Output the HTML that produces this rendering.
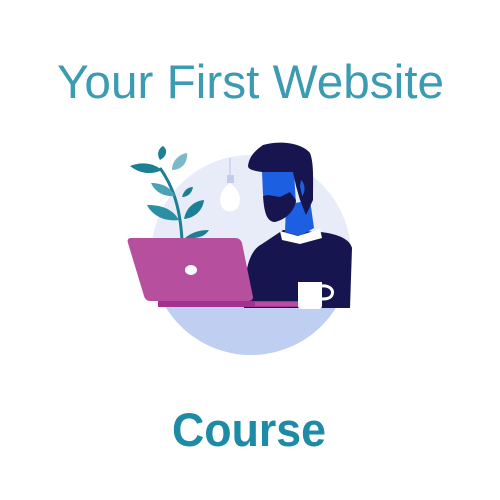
<!DOCTYPE html>
<html><head><style>html,body{margin:0;padding:0;background:#fff;width:500px;height:500px;overflow:hidden}</style></head>
<body>
<svg width="500" height="500" viewBox="0 0 500 500" xmlns="http://www.w3.org/2000/svg">
<text x="57" y="98" font-family="Liberation Sans, sans-serif" font-size="47" fill="#3a9bb2" textLength="387" lengthAdjust="spacingAndGlyphs">Your First Website</text>
<text x="172" y="446" font-family="Liberation Sans, sans-serif" font-weight="bold" font-size="47" fill="#1e8ba6" textLength="154" lengthAdjust="spacingAndGlyphs">Course</text>
<defs><clipPath id="c"><circle cx="251" cy="255" r="100"/></clipPath></defs>
<g clip-path="url(#c)">
<rect x="140" y="150" width="220" height="210" fill="#e8ecf9"/>
<rect x="140" y="307" width="220" height="60" fill="#bfcff1"/>
</g>
<!-- bulb -->
<line x1="230" y1="158" x2="230" y2="175" stroke="#c9d2ee" stroke-width="1.5"/>
<rect x="227" y="175" width="7" height="8" fill="#c2cdee"/>
<path d="M230 183 C220 190 218 200 222 207 C226 213 234 213 238 207 C242 200 240 190 230 183Z" fill="#fff"/>
<!-- plant -->
<path d="M160 168 C172 185 180 205 182 240" stroke="#1c7f93" stroke-width="3" fill="none"/>
<path d="M162 170 C152 162 140 162 130 166 C140 174 152 175 162 170Z" fill="#1c7f93"/>
<path d="M160 160 C156 154 159 148 163 146 C168 150 167 156 160 160Z" fill="#1c7f93"/>
<path d="M172 170 C172 160 180 154 187 153 C188 162 182 170 172 170Z" fill="#7ab9c7"/>
<path d="M175 196 C170 186 160 183 151 183 C155 192 164 197 175 196Z" fill="#4aa3b5"/>
<path d="M182 197 C184 190 188 187 193 187 C192 193 188 197 182 197Z" fill="#1c7f93"/>
<path d="M179 220 C172 208 160 205 147 205 C152 215 164 222 179 220Z" fill="#2a8fa3"/>
<path d="M184 219 C186 208 194 201 204 200 C203 210 195 218 184 219Z" fill="#1c7f93"/>
<path d="M185 238 C192 232 200 230 209 230 C205 237 196 239 185 238Z" fill="#1c7f93"/>
<!-- person body -->
<path d="M244 308 C244 280 246 252 262 244 L283 230 L320 232 C340 234 350 240 352 248 L350 308Z" fill="#161550"/>
<path d="M286 205 L310 200 L314 228 L300 236 L285 232Z" fill="#1c5fe0"/>
<path d="M280 231 L298 236 L320 229 L322 238 L300 244 L282 240Z" fill="#fff"/>
<path d="M262 172 L294 171 L296 205 L268 207 L263 195Z" fill="#1c5fe0"/>
<path d="M263 196 C264 210 266 222 275 222 C287 219 295 210 296 200 L290 192 L280 197 L268 195Z" fill="#161550"/>
<path d="M248 166 C249 158 253 152 263 145 C280 140 302 143 310 153 C314 163 313 180 313 200 L306 215 L300 200 L296 186 L293 172 L262 172 C256 171 248 170 248 166Z" fill="#161550"/>
<path d="M301 180 C305 183 306 192 302 196 L300 186Z" fill="#1c5fe0"/>
<!-- desk strip -->
<rect x="158" y="301" width="142" height="6" fill="#a2328e"/>
<rect x="255" y="302" width="46" height="4" fill="#b64ea0"/>
<!-- laptop -->
<path d="M131 238 L235 238 C239 238 241 240 242 243 L253 297 C253 300 251 301 248 301 L150 301 C147 301 145 299 144 296 L128 243 C127 240 128 238 131 238Z" fill="#b74f9f"/>
<ellipse cx="191" cy="270" rx="6" ry="5" fill="#fff"/>
<!-- mug -->
<path d="M298 282 L322 282 L322 306 C322 308 320 309 318 309 L302 309 C300 309 298 308 298 306Z" fill="#fff"/>
<path d="M321 286 C330 285 334 290 332 295 C330 299 325 299 321 299" stroke="#fff" stroke-width="3" fill="none"/>
</svg>
</body></html>
